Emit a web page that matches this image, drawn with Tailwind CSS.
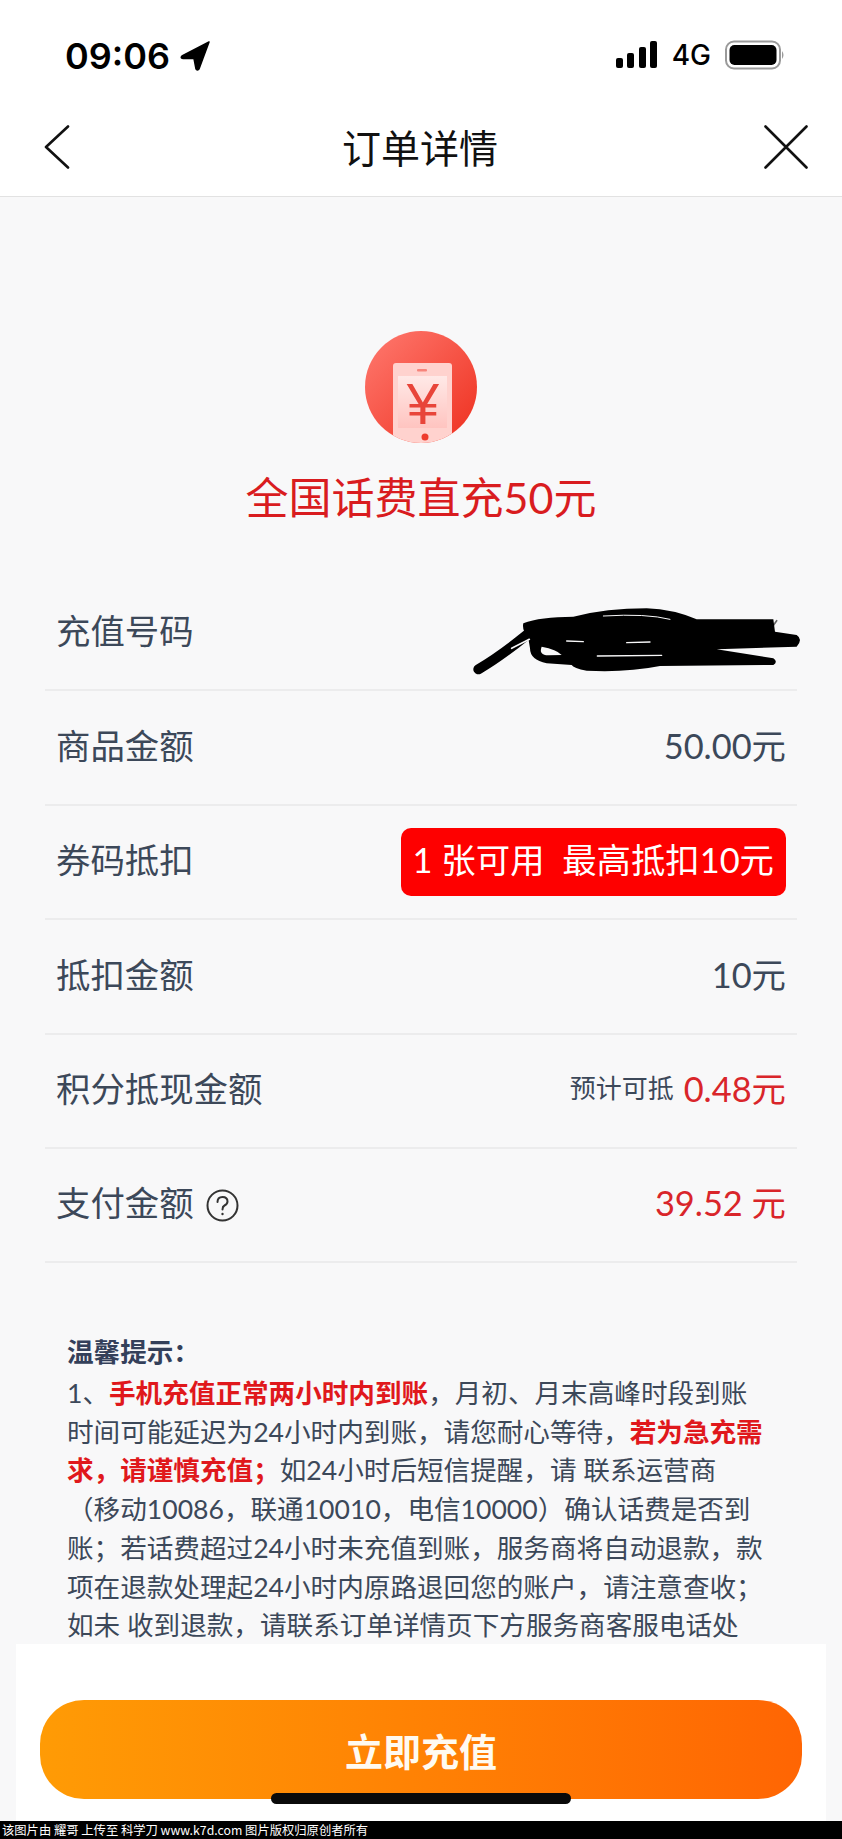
<!DOCTYPE html>
<html lang="zh-CN">
<head>
    <meta charset="UTF-8">
    <meta name="viewport" content="width=device-width, initial-scale=1.0">
    <title>订单详情</title>
    <script src="https://cdn.jsdelivr.net/npm/@tailwindcss/browser@4"></script>
</head>
<body class="bg-[#f8f8f9] font-['Lato','Noto_Sans_CJK_SC',sans-serif] text-[#3c4859]">
<div class="relative w-[842px] h-[1839px] overflow-hidden">

    <!-- status bar -->
    <div class="h-[96px] bg-white flex items-start justify-between pl-[65px] pr-[57px] pt-[38px]">
        <div class="flex items-center gap-[10px] h-[36px] font-['Inter',sans-serif] font-semibold text-[36px] text-black">
            <span class="leading-none">09:06</span>
            <svg width="30" height="30" viewBox="0 0 30 30" fill="#000"><path d="M29 1 L2 15 Q0 17 3 17.500 L14 17.500 L16 28 Q17 30 19 28 Z" stroke="#000" stroke-width="1.500" stroke-linejoin="round"/></svg>
        </div>
        <div class="flex items-center h-[34px]">
            <svg width="42" height="28" viewBox="0 0 42 28" fill="#000">
                <rect x="0" y="17" width="7" height="10" rx="2"/>
                <rect x="11" y="12" width="7" height="15" rx="2"/>
                <rect x="23" y="6" width="7" height="21" rx="2"/>
                <rect x="34" y="0" width="7" height="27" rx="2"/>
            </svg>
            <span class="ml-[14px] font-['Inter',sans-serif] font-medium text-[28px] leading-none text-black">4G</span>
            <svg class="ml-[14px]" width="60" height="30" viewBox="0 0 60 30">
                <rect x="1" y="1.500" width="54" height="27" rx="8" fill="none" stroke="#9a9a9a" stroke-width="2"/>
                <rect x="4.500" y="5" width="47" height="20" rx="5" fill="#000"/>
                <path d="M57 11 Q60 15 57 19 Z" fill="#9a9a9a"/>
            </svg>
        </div>
    </div>

    <!-- nav bar -->
    <div class="h-[101px] bg-white border-b border-[#e2e2e2] flex items-center justify-between pl-[44px] pr-[34px]">
        <svg class="mt-[2px]" width="26" height="44" viewBox="0 0 26 44" fill="none" stroke="#111" stroke-width="2.600" stroke-linecap="round" stroke-linejoin="round"><path d="M24 1.500 L2 22 L24 42.500"/></svg>
        <span class="ml-[6px] text-[39px] leading-none font-['Noto_Sans_CJK_SC',sans-serif] text-[#111] font-normal">订单详情</span>
        <svg class="mt-[2px]" width="44" height="44" viewBox="0 0 44 44" fill="none" stroke="#111" stroke-width="2.600" stroke-linecap="round"><path d="M1.500 1.500 L42.500 42.500 M42.500 1.500 L1.500 42.500"/></svg>
    </div>

    <!-- product -->
    <div class="flex flex-col items-center pt-[134px]">
        <svg class="blur-[0.6px]" width="112" height="112" viewBox="0 0 112 112">
            <defs>
                <linearGradient id="logo-bg" x1="0" y1="0" x2="1" y2="1">
                    <stop offset="0" stop-color="#ff7a70"/>
                    <stop offset="1" stop-color="#ee2f1e"/>
                </linearGradient>
                <linearGradient id="logo-screen" x1="0" y1="0" x2="0" y2="1">
                    <stop offset="0" stop-color="#ffe9e7"/>
                    <stop offset="1" stop-color="#ffc4c0"/>
                </linearGradient>
                <clipPath id="logo-clip"><circle cx="56" cy="56" r="56"/></clipPath>
            </defs>
            <circle cx="56" cy="56" r="56" fill="url(#logo-bg)"/>
            <g clip-path="url(#logo-clip)">
                <rect x="28" y="32" width="59" height="90" rx="3" fill="#ffd2ce"/>
                <rect x="33" y="45" width="49" height="52" fill="url(#logo-screen)"/>
                <rect x="52" y="38" width="10" height="2.500" rx="1" fill="#f7847b"/>
                <circle cx="60" cy="106" r="3.500" fill="#ee3b2d"/>
            </g>
            <text x="58" y="93" text-anchor="middle" font-family="Liberation Sans" font-size="58" fill="#e8453a">¥</text>
        </svg>
        <div class="mt-[30px] text-[43px] leading-[50px] text-[#d91c1f]">全国话费直充50元</div>
    </div>

    <!-- rows -->
    <div class="relative mt-[54px] mx-[45px] text-[34.4px]">
        <div class="h-[114.4px] pb-[4px] border-b-2 border-[#ececed] flex items-center justify-between px-[11px]">
            <span>充值号码</span>
        </div>
        <div class="h-[114.4px] pb-[4px] border-b-2 border-[#ececed] flex items-center justify-between px-[11px]">
            <span>商品金额</span>
            <span>50.00元</span>
        </div>
        <div class="h-[114.4px] pb-[4px] border-b-2 border-[#ececed] flex items-center justify-between px-[11px]">
            <span>券码抵扣</span>
            <span class="h-[68px] mt-[4px] bg-[#fe0000] text-[#fff] rounded-[10px] px-[12px] flex items-center whitespace-pre"><span class="mt-[-4px]">1 张可用  最高抵扣10元</span></span>
        </div>
        <div class="h-[114.4px] pb-[4px] border-b-2 border-[#ececed] flex items-center justify-between px-[11px]">
            <span>抵扣金额</span>
            <span>10元</span>
        </div>
        <div class="h-[114.4px] pb-[4px] border-b-2 border-[#ececed] flex items-center justify-between px-[11px]">
            <span>积分抵现金额</span>
            <span class="flex items-center gap-[10px]"><span class="text-[26px]">预计可抵</span><span class="text-[#d9252a]">0.48元</span></span>
        </div>
        <div class="h-[114.4px] pb-[4px] border-b-2 border-[#ececed] flex items-center justify-between px-[11px]">
            <span class="flex items-center gap-[12px]">支付金额
                <svg class="mt-[4px]" width="33" height="33" viewBox="0 0 33 33" fill="none" stroke="#333" stroke-width="2"><circle cx="16.500" cy="16.500" r="15"/><path d="M11.500 13 Q11.500 8 16.500 8 Q21.500 8 21.500 12.500 Q21.500 15 18.500 16.500 Q16.500 17.500 16.500 20.500" stroke-linecap="round"/><circle cx="16.500" cy="25" r="1.200" fill="#333" stroke="none"/></svg>
            </span>
            <span class="text-[#d9252a] whitespace-pre">39.52 元</span>
        </div>

        <!-- hand drawn redaction over the phone number -->
        <svg class="absolute left-[395px] top-[3px]" width="402" height="110" viewBox="0 0 1206 330" fill="none" stroke="#000" stroke-linecap="round" stroke-linejoin="round">
            <path d="M1010 122 L990 150" stroke="#666" stroke-width="5"/>
            <path d="M250 130 Q300 110 400 110 Q500 85 620 85 Q700 88 770 118 L1000 118 L1005 155 L1070 165 Q1090 178 1070 200 L830 208 L1000 235 Q1015 245 1000 255 L660 258 Q560 278 440 272 Q400 265 395 255 L320 250 Q270 240 270 205 L265 175 Q245 150 250 130 Z" fill="#000" stroke="none"/>
            <path d="M115 268 Q180 230 260 165" stroke-width="30"/>
            <path d="M215 205 L268 178" stroke="#f8f8f9" stroke-width="5"/>
            <path d="M305 200 Q295 225 325 226 L365 225 Q350 208 305 200 Z" fill="#f8f8f9" stroke="none"/>
            <path d="M472 228 L665 226" stroke="#f8f8f9" stroke-width="4"/>
            <path d="M380 183 L430 185 M560 188 L630 186" stroke="#f8f8f9" stroke-width="4"/>
            <path d="M490 108 Q620 100 690 118" stroke="#f8f8f9" stroke-width="3"/>
        </svg>
    </div>

    <!-- tips -->
    <div class="mt-[70px] pl-[67px] text-[26.6px] leading-[38.7px] whitespace-nowrap">
        <div class="font-bold text-[#34405a]">温馨提示：</div>
        <div class="mt-[2px]">
            1、<b class="text-[#e0181c]">手机充值正常两小时内到账</b>，月初、月末高峰时段到账<br>
            时间可能延迟为24小时内到账，请您耐心等待，<b class="text-[#e0181c]">若为急充需</b><br>
            <b class="text-[#e0181c]">求，请谨慎充值；</b>如24小时后短信提醒，请 联系运营商<br>
            （移动10086，联通10010，电信10000）确认话费是否到<br>
            账；若话费超过24小时未充值到账，服务商将自动退款，款<br>
            项在退款处理起24小时内原路退回您的账户，请注意查收；<br>
            如未 收到退款，请联系订单详情页下方服务商客服电话处
        </div>
    </div>

    <!-- bottom bar -->
    <div class="absolute left-[16px] right-[16px] top-[1644px] h-[177px] bg-white px-[24px] pt-[56px]">
        <div class="h-[99px] rounded-[44px] bg-gradient-to-r from-[#ff9b05] to-[#ff6503] flex items-center justify-center text-[38px] font-bold text-[#fffaf0] font-['Noto_Sans_CJK_SC',sans-serif]">立即充值</div>
    </div>
    <div class="absolute left-[271px] top-[1793px] w-[300px] h-[11px] rounded-full bg-[#0a0a0a]"></div>

    <!-- watermark -->
    <div class="absolute left-0 right-0 bottom-0 h-[18px] bg-black text-white text-[12.3px] leading-[18px] pl-[2px] whitespace-pre font-['Noto_Sans_CJK_SC',sans-serif]">该图片由 耀哥 上传至 科学刀 www.k7d.com 图片版权归原创者所有</div>
</div>
</body>
</html>
